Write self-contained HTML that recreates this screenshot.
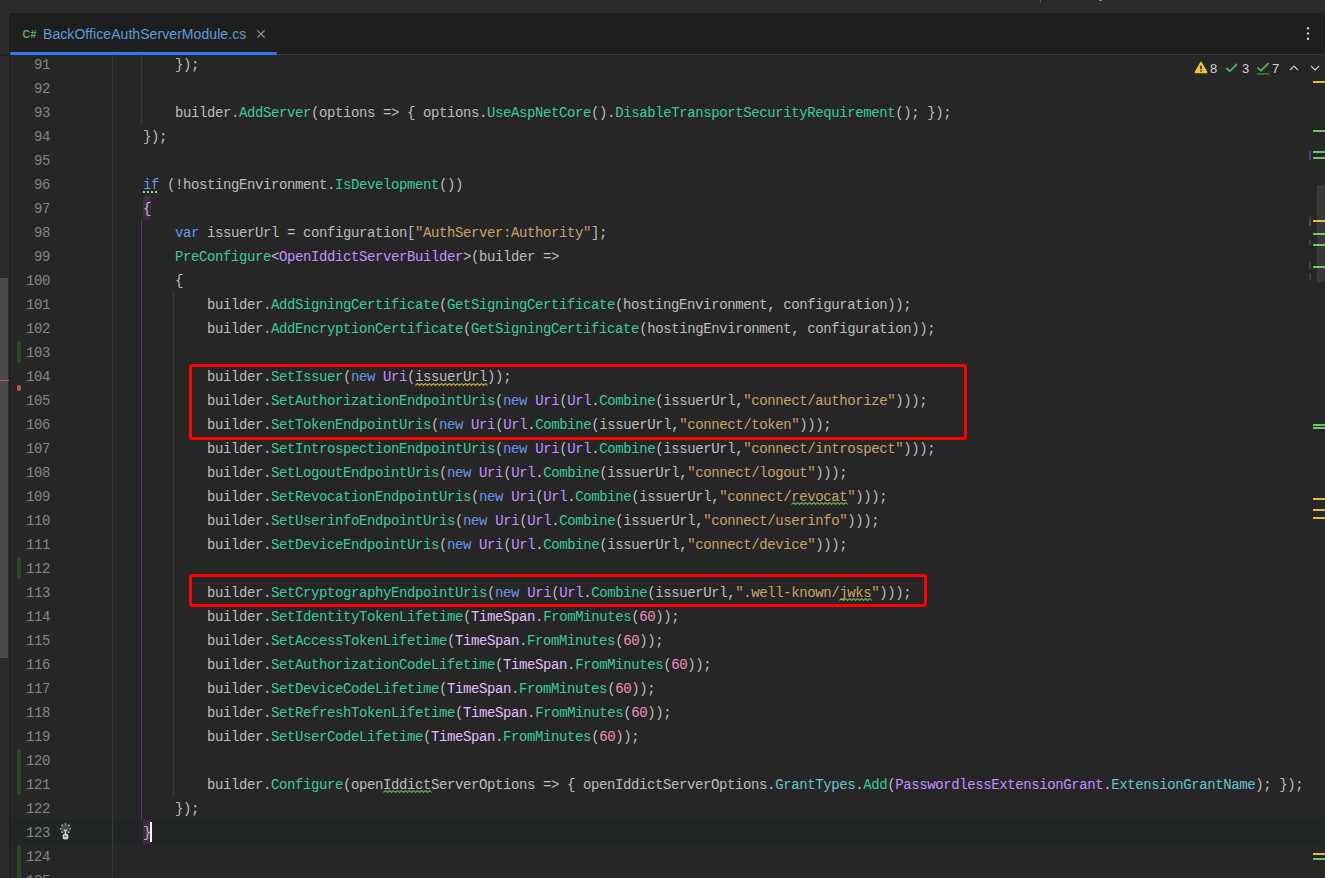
<!DOCTYPE html>
<html><head><meta charset="utf-8"><style>
*{margin:0;padding:0;box-sizing:border-box}
html,body{width:1325px;height:878px;overflow:hidden;background:#262626}
body{position:relative;font-family:"Liberation Mono",monospace}
.abs{position:absolute}
#top{left:0;top:0;width:1325px;height:13px;background:#2b2b2b}
#lstrip{left:0;top:13px;width:9px;height:865px;background:#2b2b2b}
#lsep{left:9px;top:13px;width:1px;height:865px;background:#1e1e1e}
#thumbL{left:0;top:278px;width:8px;height:380px;background:#4b4b4b}
#tabbar{left:10px;top:13px;width:1315px;height:41px;background:#1e1e1e}
#tabsep{left:10px;top:54px;width:1315px;height:1px;background:#393b40}
#tabline{left:10px;top:52px;width:267px;height:3px;background:#3574f0;border-radius:2px}
#tabtext{left:43px;top:26px;font-family:"Liberation Sans",sans-serif;font-size:14px;letter-spacing:0.07px;color:#5e9cdc;line-height:16px;white-space:pre}
#csicon{left:22.5px;top:28.5px;font-family:"Liberation Sans",sans-serif;font-size:10.5px;font-weight:bold;letter-spacing:0.3px;color:#58a863;line-height:10px}
.ln{position:absolute;left:111px;height:24px;line-height:24px;font-size:14px;letter-spacing:-0.4px;white-space:pre;color:#bdbdbd}
.num{position:absolute;left:10px;width:40px;text-align:right;height:24px;line-height:24px;font-size:14px;letter-spacing:-0.4px;color:#858585}
.k{color:#6c95eb}.m{color:#39cc9b}.c{color:#c191ff}.s{color:#e1bfff}.str{color:#c9a26d}.n{color:#ed94c0}.f{color:#66c3cc}
.wnum{top:61px;font-family:"Liberation Sans",sans-serif;font-size:13px;line-height:16px;color:#cfd2d6}
.redbox{position:absolute;border:3px solid #ff0000;border-radius:3px}
</style></head>
<body>
<div class="abs" id="top"></div>
<div class="abs" style="left:1040px;top:0px;width:1px;height:3px;background:#555555;"></div>
<div class="abs" style="left:1099px;top:0px;width:3px;height:1px;background:#5fb865;border-radius:1px"></div>
<div class="abs" id="lstrip"></div><div class="abs" id="thumbL"></div><div class="abs" id="lsep"></div>
<div class="abs" style="left:0px;top:54px;width:9px;height:2px;background:#202020;"></div>
<div class="abs" style="left:10px;top:820px;width:1315px;height:24px;background:#222525"></div>
<div class="abs" style="left:112px;top:55px;width:1px;height:823px;background:#393939;"></div>
<div class="abs" style="left:141px;top:55px;width:1px;height:69px;background:#393939;"></div>
<div class="abs" style="left:141px;top:220px;width:1px;height:600px;background:#623a6c;"></div>
<div class="abs" style="left:173px;top:292px;width:1px;height:504px;background:#393939;"></div>
<div class="abs" style="left:143px;top:196px;width:8px;height:24px;background:#412845;"></div>
<div class="abs" style="left:143px;top:820px;width:8px;height:24px;background:#412845;"></div>
<div class="abs" style="left:17px;top:341px;width:4px;height:22px;background:#2a4624;border-radius:2px"></div>
<div class="abs" style="left:17px;top:557px;width:4px;height:22px;background:#2a4624;border-radius:2px"></div>
<div class="abs" style="left:17px;top:749px;width:4px;height:46px;background:#2a4624;border-radius:2px"></div>
<div class="abs" style="left:17px;top:845px;width:4px;height:46px;background:#2a4624;border-radius:2px"></div>
<div class="abs" style="left:17px;top:385px;width:4px;height:6px;background:#c94f4f;border-radius:2px"></div>
<div class="abs" style="left:0px;top:380px;width:9px;height:1px;background:#d45555;"></div>
<div class="abs" style="left:1313px;top:81px;width:12px;height:2px;background:#e5b83c;"></div>
<div class="abs" style="left:1313px;top:130px;width:12px;height:2px;background:#6fc46a;"></div>
<div class="abs" style="left:1313px;top:151px;width:12px;height:2px;background:#6fc46a;"></div>
<div class="abs" style="left:1313px;top:157px;width:12px;height:2px;background:#6fc46a;"></div>
<div class="abs" style="left:1313px;top:220px;width:12px;height:2px;background:#e5b83c;"></div>
<div class="abs" style="left:1313px;top:233px;width:12px;height:2px;background:#6fc46a;"></div>
<div class="abs" style="left:1313px;top:244px;width:12px;height:2px;background:#6fc46a;"></div>
<div class="abs" style="left:1313px;top:266px;width:12px;height:2px;background:#6fc46a;"></div>
<div class="abs" style="left:1313px;top:424px;width:12px;height:2px;background:#6fc46a;"></div>
<div class="abs" style="left:1313px;top:427px;width:12px;height:2px;background:#6fc46a;"></div>
<div class="abs" style="left:1313px;top:498px;width:12px;height:2px;background:#e5b83c;"></div>
<div class="abs" style="left:1313px;top:509px;width:12px;height:2px;background:#e5b83c;"></div>
<div class="abs" style="left:1313px;top:517px;width:12px;height:2px;background:#e5b83c;"></div>
<div class="abs" style="left:1313px;top:853px;width:12px;height:2px;background:#e5b83c;"></div>
<div class="abs" style="left:1313px;top:858px;width:12px;height:2px;background:#6fc46a;"></div>
<div class="abs" style="left:1309px;top:151px;width:2px;height:9px;background:#463c94;"></div>
<div class="abs" style="left:1309px;top:216px;width:2px;height:5px;background:#2c4f28;"></div>
<div class="abs" style="left:1309px;top:240px;width:2px;height:5px;background:#2c4f28;"></div>
<div class="abs" style="left:1309px;top:262px;width:2px;height:7px;background:#2c4f28;"></div>
<div class="abs" style="left:1309px;top:273px;width:2px;height:7px;background:#2c4f28;"></div>
<div class="abs" style="left:1309px;top:221px;width:2px;height:5px;background:#505050;"></div>
<div class="abs" style="left:1317px;top:185px;width:8px;height:97px;background:rgba(255,255,255,0.09);"></div>
<svg class="abs" style="left:415px;top:383px" width="73" height="4"><polyline points="0.5,2.5 2.5,0.5 4.5,2.5 6.5,0.5 8.5,2.5 10.5,0.5 12.5,2.5 14.5,0.5 16.5,2.5 18.5,0.5 20.5,2.5 22.5,0.5 24.5,2.5 26.5,0.5 28.5,2.5 30.5,0.5 32.5,2.5 34.5,0.5 36.5,2.5 38.5,0.5 40.5,2.5 42.5,0.5 44.5,2.5 46.5,0.5 48.5,2.5 50.5,0.5 52.5,2.5 54.5,0.5 56.5,2.5 58.5,0.5 60.5,2.5 62.5,0.5 64.5,2.5 66.5,0.5 68.5,2.5 70.5,0.5 72.5,2.5" fill="none" stroke="#c9a83c" stroke-width="1.15"/></svg>
<svg class="abs" style="left:383px;top:790px" width="49" height="4"><polyline points="0.5,2.5 2.5,0.5 4.5,2.5 6.5,0.5 8.5,2.5 10.5,0.5 12.5,2.5 14.5,0.5 16.5,2.5 18.5,0.5 20.5,2.5 22.5,0.5 24.5,2.5 26.5,0.5 28.5,2.5 30.5,0.5 32.5,2.5 34.5,0.5 36.5,2.5 38.5,0.5 40.5,2.5 42.5,0.5 44.5,2.5 46.5,0.5 48.5,2.5" fill="none" stroke="#68a45e" stroke-width="1.15"/></svg>
<svg class="abs" style="left:791px;top:502px" width="57" height="4"><polyline points="0.5,2.5 2.5,0.5 4.5,2.5 6.5,0.5 8.5,2.5 10.5,0.5 12.5,2.5 14.5,0.5 16.5,2.5 18.5,0.5 20.5,2.5 22.5,0.5 24.5,2.5 26.5,0.5 28.5,2.5 30.5,0.5 32.5,2.5 34.5,0.5 36.5,2.5 38.5,0.5 40.5,2.5 42.5,0.5 44.5,2.5 46.5,0.5 48.5,2.5 50.5,0.5 52.5,2.5 54.5,0.5 56.5,2.5" fill="none" stroke="#72a85c" stroke-width="1.15"/></svg>
<svg class="abs" style="left:839px;top:598px" width="33" height="4"><polyline points="0.5,2.5 2.5,0.5 4.5,2.5 6.5,0.5 8.5,2.5 10.5,0.5 12.5,2.5 14.5,0.5 16.5,2.5 18.5,0.5 20.5,2.5 22.5,0.5 24.5,2.5 26.5,0.5 28.5,2.5 30.5,0.5 32.5,2.5" fill="none" stroke="#72a85c" stroke-width="1.15"/></svg>
<div class="abs" style="left:143px;top:191px;width:2px;height:2px;background:#8fe27a;"></div>
<div class="abs" style="left:147px;top:191px;width:2px;height:2px;background:#8fe27a;"></div>
<div class="abs" style="left:151px;top:191px;width:2px;height:2px;background:#8fe27a;"></div>
<div class="abs" style="left:155px;top:191px;width:2px;height:2px;background:#8fe27a;"></div>
<svg class="abs" style="left:58px;top:821px" width="16" height="21"><circle cx="7.4" cy="7.8" r="4.8" fill="#4a4b50" stroke="#c8c8c8" stroke-width="1.3" stroke-dasharray="1.5 2.2" stroke-dashoffset="0.8" transform="rotate(-90 7.4 7.8)"/><path d="M5.9 8.6 L7.4 10.4 L8.9 8.6 M7.4 10.4 L7.4 12.4" stroke="#d8d8d8" stroke-width="1.1" fill="none"/><rect x="4.6" y="12.8" width="5.8" height="5.8" rx="2" fill="#d0d0d0"/><rect x="6" y="14.6" width="2.4" height="1.2" fill="#555"/></svg>
<div class="abs" style="left:150px;top:822px;width:2px;height:20px;background:#ffffff;"></div>
<div class="num" style="top:53px">91</div>
<div class="num" style="top:77px">92</div>
<div class="num" style="top:101px">93</div>
<div class="num" style="top:125px">94</div>
<div class="num" style="top:149px">95</div>
<div class="num" style="top:173px">96</div>
<div class="num" style="top:197px">97</div>
<div class="num" style="top:221px">98</div>
<div class="num" style="top:245px">99</div>
<div class="num" style="top:269px">100</div>
<div class="num" style="top:293px">101</div>
<div class="num" style="top:317px">102</div>
<div class="num" style="top:341px">103</div>
<div class="num" style="top:365px">104</div>
<div class="num" style="top:389px">105</div>
<div class="num" style="top:413px">106</div>
<div class="num" style="top:437px">107</div>
<div class="num" style="top:461px">108</div>
<div class="num" style="top:485px">109</div>
<div class="num" style="top:509px">110</div>
<div class="num" style="top:533px">111</div>
<div class="num" style="top:557px">112</div>
<div class="num" style="top:581px">113</div>
<div class="num" style="top:605px">114</div>
<div class="num" style="top:629px">115</div>
<div class="num" style="top:653px">116</div>
<div class="num" style="top:677px">117</div>
<div class="num" style="top:701px">118</div>
<div class="num" style="top:725px">119</div>
<div class="num" style="top:749px">120</div>
<div class="num" style="top:773px">121</div>
<div class="num" style="top:797px">122</div>
<div class="num" style="top:821px">123</div>
<div class="num" style="top:845px">124</div>
<div class="num" style="top:869px">125</div>
<div class="ln" style="top:53px">        });</div>
<div class="ln" style="top:77px"></div>
<div class="ln" style="top:101px">        builder.<span class="m">AddServer</span>(options =&gt; { options.<span class="m">UseAspNetCore</span>().<span class="m">DisableTransportSecurityRequirement</span>(); });</div>
<div class="ln" style="top:125px">    });</div>
<div class="ln" style="top:149px"></div>
<div class="ln" style="top:173px">    <span class="k">if</span> (!hostingEnvironment.<span class="m">IsDevelopment</span>())</div>
<div class="ln" style="top:197px">    {</div>
<div class="ln" style="top:221px">        <span class="k">var</span> issuerUrl = configuration[<span class="str">&quot;AuthServer:Authority&quot;</span>];</div>
<div class="ln" style="top:245px">        <span class="m">PreConfigure</span>&lt;<span class="c">OpenIddictServerBuilder</span>&gt;(builder =&gt;</div>
<div class="ln" style="top:269px">        {</div>
<div class="ln" style="top:293px">            builder.<span class="m">AddSigningCertificate</span>(<span class="m">GetSigningCertificate</span>(hostingEnvironment, configuration));</div>
<div class="ln" style="top:317px">            builder.<span class="m">AddEncryptionCertificate</span>(<span class="m">GetSigningCertificate</span>(hostingEnvironment, configuration));</div>
<div class="ln" style="top:341px"></div>
<div class="ln" style="top:365px">            builder.<span class="m">SetIssuer</span>(<span class="k">new</span> <span class="c">Uri</span>(issuerUrl));</div>
<div class="ln" style="top:389px">            builder.<span class="m">SetAuthorizationEndpointUris</span>(<span class="k">new</span> <span class="c">Uri</span>(<span class="c">Url</span>.<span class="m">Combine</span>(issuerUrl,<span class="str">&quot;connect/authorize&quot;</span>)));</div>
<div class="ln" style="top:413px">            builder.<span class="m">SetTokenEndpointUris</span>(<span class="k">new</span> <span class="c">Uri</span>(<span class="c">Url</span>.<span class="m">Combine</span>(issuerUrl,<span class="str">&quot;connect/token&quot;</span>)));</div>
<div class="ln" style="top:437px">            builder.<span class="m">SetIntrospectionEndpointUris</span>(<span class="k">new</span> <span class="c">Uri</span>(<span class="c">Url</span>.<span class="m">Combine</span>(issuerUrl,<span class="str">&quot;connect/introspect&quot;</span>)));</div>
<div class="ln" style="top:461px">            builder.<span class="m">SetLogoutEndpointUris</span>(<span class="k">new</span> <span class="c">Uri</span>(<span class="c">Url</span>.<span class="m">Combine</span>(issuerUrl,<span class="str">&quot;connect/logout&quot;</span>)));</div>
<div class="ln" style="top:485px">            builder.<span class="m">SetRevocationEndpointUris</span>(<span class="k">new</span> <span class="c">Uri</span>(<span class="c">Url</span>.<span class="m">Combine</span>(issuerUrl,<span class="str">&quot;connect/revocat&quot;</span>)));</div>
<div class="ln" style="top:509px">            builder.<span class="m">SetUserinfoEndpointUris</span>(<span class="k">new</span> <span class="c">Uri</span>(<span class="c">Url</span>.<span class="m">Combine</span>(issuerUrl,<span class="str">&quot;connect/userinfo&quot;</span>)));</div>
<div class="ln" style="top:533px">            builder.<span class="m">SetDeviceEndpointUris</span>(<span class="k">new</span> <span class="c">Uri</span>(<span class="c">Url</span>.<span class="m">Combine</span>(issuerUrl,<span class="str">&quot;connect/device&quot;</span>)));</div>
<div class="ln" style="top:557px"></div>
<div class="ln" style="top:581px">            builder.<span class="m">SetCryptographyEndpointUris</span>(<span class="k">new</span> <span class="c">Uri</span>(<span class="c">Url</span>.<span class="m">Combine</span>(issuerUrl,<span class="str">&quot;.well-known/jwks&quot;</span>)));</div>
<div class="ln" style="top:605px">            builder.<span class="m">SetIdentityTokenLifetime</span>(<span class="s">TimeSpan</span>.<span class="m">FromMinutes</span>(<span class="n">60</span>));</div>
<div class="ln" style="top:629px">            builder.<span class="m">SetAccessTokenLifetime</span>(<span class="s">TimeSpan</span>.<span class="m">FromMinutes</span>(<span class="n">60</span>));</div>
<div class="ln" style="top:653px">            builder.<span class="m">SetAuthorizationCodeLifetime</span>(<span class="s">TimeSpan</span>.<span class="m">FromMinutes</span>(<span class="n">60</span>));</div>
<div class="ln" style="top:677px">            builder.<span class="m">SetDeviceCodeLifetime</span>(<span class="s">TimeSpan</span>.<span class="m">FromMinutes</span>(<span class="n">60</span>));</div>
<div class="ln" style="top:701px">            builder.<span class="m">SetRefreshTokenLifetime</span>(<span class="s">TimeSpan</span>.<span class="m">FromMinutes</span>(<span class="n">60</span>));</div>
<div class="ln" style="top:725px">            builder.<span class="m">SetUserCodeLifetime</span>(<span class="s">TimeSpan</span>.<span class="m">FromMinutes</span>(<span class="n">60</span>));</div>
<div class="ln" style="top:749px"></div>
<div class="ln" style="top:773px">            builder.<span class="m">Configure</span>(openIddictServerOptions =&gt; { openIddictServerOptions.<span class="f">GrantTypes</span>.<span class="m">Add</span>(<span class="c">PasswordlessExtensionGrant</span>.<span class="f">ExtensionGrantName</span>); });</div>
<div class="ln" style="top:797px">        });</div>
<div class="ln" style="top:821px">    }</div>
<div class="ln" style="top:845px"></div>
<div class="ln" style="top:869px"></div>
<div class="abs" id="tabbar"></div><div class="abs" id="tabsep"></div><div class="abs" id="tabline"></div>
<div class="abs" id="csicon">C#</div><div class="abs" id="tabtext">BackOfficeAuthServerModule.cs</div>
<svg class="abs" style="left:1300px;top:20px" width="16" height="24"><circle cx="8" cy="8.3" r="1.2" fill="#ced0d6"/><circle cx="8" cy="13.4" r="1.2" fill="#ced0d6"/><circle cx="8" cy="18.8" r="1.2" fill="#ced0d6"/></svg>
<svg class="abs" style="left:254px;top:27px" width="14" height="14"><path d="M3.5 3.5 L10.5 10.5 M10.5 3.5 L3.5 10.5" stroke="#8c8c8c" stroke-width="1.2"/></svg>
<svg class="abs" style="left:1190px;top:58px" width="135" height="20"><path d="M11 4.4 L16.6 13.9 Q17 14.5 16.3 14.5 L5.7 14.5 Q5 14.5 5.4 13.9 Z" fill="#f0c13c" stroke="#f0c13c" stroke-width="1.4" stroke-linejoin="round"/><rect x="10.25" y="7.6" width="1.5" height="3.6" fill="#262626"/><rect x="10.25" y="12.1" width="1.5" height="1.5" fill="#262626"/><path d="M36.3 9.8 L39.8 13.3 L47 6" fill="none" stroke="#55ad5e" stroke-width="1.8"/><path d="M67.5 9.3 L71 12.8 L78.6 5" fill="none" stroke="#55ad5e" stroke-width="1.8"/><path d="M67 16.8 L68.5 15 L70 16.8 L71.5 15 L73 16.8 L74.5 15 L76 16.8 L77.5 15 L79 16.8" fill="none" stroke="#55ad5e" stroke-width="0.9"/><path d="M100 12 L104 8 L108 12" fill="none" stroke="#ced0d6" stroke-width="1.1"/><path d="M121 8 L125 12 L129 8" fill="none" stroke="#ced0d6" stroke-width="1.1"/></svg>
<div class="abs wnum" style="left:1210px">8</div><div class="abs wnum" style="left:1242px">3</div><div class="abs wnum" style="left:1272px">7</div>
<div class="redbox" style="left:189px;top:364px;width:778px;height:76px"></div>
<div class="redbox" style="left:189px;top:574px;width:738px;height:33px"></div>
</body></html>
